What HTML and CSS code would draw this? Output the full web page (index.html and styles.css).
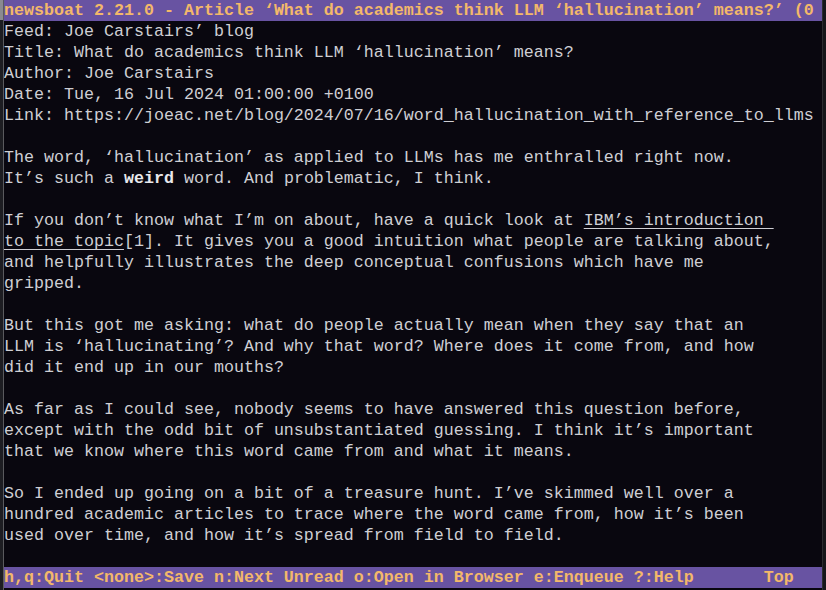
FILE: index.html
```html
<!DOCTYPE html>
<html>
<head>
<meta charset="utf-8">
<link rel="stylesheet" href="styles.css">
</head>
<body>
<div class="screen">
  <div class="edge-left"><span class="edge-cap"></span></div>
  <div class="term">
    <div class="row bar">newsboat 2.21.0 - Article ‘What do academics think LLM ‘hallucination’ means?’ (0</div>
    <div class="content">
      <div class="row">Feed: Joe Carstairs’ blog</div>
      <div class="row">Title: What do academics think LLM ‘hallucination’ means?</div>
      <div class="row">Author: Joe Carstairs</div>
      <div class="row">Date: Tue, 16 Jul 2024 01:00:00 +0100</div>
      <div class="row">Link: https://joeac.net/blog/2024/07/16/word_hallucination_with_reference_to_llms</div>
      <div class="row"> </div>
      <div class="row">The word, ‘hallucination’ as applied to LLMs has me enthralled right now.</div>
      <div class="row">It’s such a <b class="bold">weird</b> word. And problematic, I think.</div>
      <div class="row"> </div>
      <div class="row">If you don’t know what I’m on about, have a quick look at <span class="link">IBM’s introduction </span></div>
      <div class="row"><span class="link">to the topic</span>[1]. It gives you a good intuition what people are talking about,</div>
      <div class="row">and helpfully illustrates the deep conceptual confusions which have me</div>
      <div class="row">gripped.</div>
      <div class="row"> </div>
      <div class="row">But this got me asking: what do people actually mean when they say that an</div>
      <div class="row">LLM is ‘hallucinating’? And why that word? Where does it come from, and how</div>
      <div class="row">did it end up in our mouths?</div>
      <div class="row"> </div>
      <div class="row">As far as I could see, nobody seems to have answered this question before,</div>
      <div class="row">except with the odd bit of unsubstantiated guessing. I think it’s important</div>
      <div class="row">that we know where this word came from and what it means.</div>
      <div class="row"> </div>
      <div class="row">So I ended up going on a bit of a treasure hunt. I’ve skimmed well over a</div>
      <div class="row">hundred academic articles to trace where the word came from, how it’s been</div>
      <div class="row">used over time, and how it’s spread from field to field.</div>
      <div class="row"> </div>
    </div>
    <div class="row bar status"><span>h,q:Quit &lt;none&gt;:Save n:Next Unread o:Open in Browser e:Enqueue ?:Help</span><span class="pos">Top</span></div>
  </div>
  <div class="edge-right"></div>
</div>
</body>
</html>
```

FILE: styles.css
```css
html, body {
  margin: 0;
  padding: 0;
  background: #09070f;
  overflow: hidden;
}

.screen {
  display: flex;
  width: 826px;
  height: 590px;
  background: #09070f;
}

.edge-left {
  width: 3px;
  flex: none;
  background: #1d1d22;
  border-right: 1px solid #5a5a5e;
  display: flex;
  flex-direction: column;
}

.edge-cap {
  height: 20px;
  background: #8a8a90;
}

.edge-right {
  width: 3px;
  flex: none;
  background: #16161a;
  border-left: 1px solid #2c2c30;
}

.term {
  flex: 1;
  display: flex;
  flex-direction: column;
  min-width: 0;
  font-family: "Liberation Mono", "DejaVu Sans Mono", monospace;
  font-size: 16.66px;
  color: #cfcfd4;
}

.row {
  height: 21px;
  line-height: 21px;
  white-space: pre;
  overflow: hidden;
  padding-left: 0;
}

.content {
  flex: none;
}

.bar {
  background: #6853a2;
  color: #f3b86a;
  font-weight: bold;
}

.status {
  display: flex;
  margin-top: 0;
}

.status .pos {
  margin-left: 70px;
}

.bold {
  font-weight: bold;
  color: #e8e8ec;
}

.link {
  text-decoration: underline;
  text-decoration-thickness: 1px;
  text-underline-offset: 3px;
}
```
